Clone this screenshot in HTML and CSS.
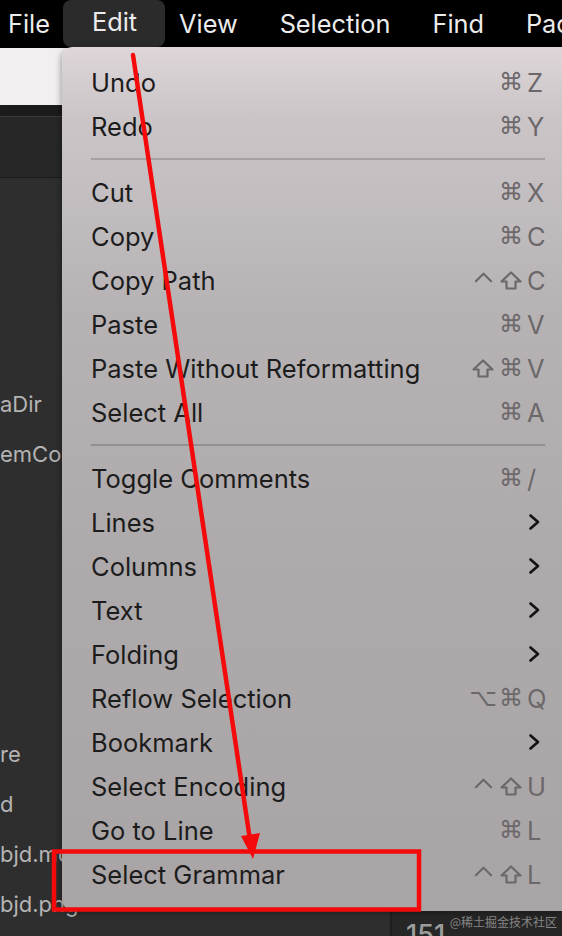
FILE: index.html
```html
<!DOCTYPE html>
<html>
<head>
<meta charset="utf-8">
<link rel="stylesheet" href="styles.css">
</head>
<body>
<div class="screen">
  <header class="menubar">
    <span class="mb-item">File</span>
    <span class="mb-item active">Edit</span>
    <span class="mb-item">View</span>
    <span class="mb-item">Selection</span>
    <span class="mb-item">Find</span>
    <span class="mb-item">Packages</span>
  </header>

  <div class="window">
    <div class="toolbar"></div>
    <div class="titlestrip"></div>
    <div class="tabbar"></div>
    <div class="main">
      <div class="tree">
        <div class="row">aDir</div>
        <div class="row">emCor</div>
        <div class="row"></div>
        <div class="row"></div>
        <div class="row"></div>
        <div class="row"></div>
        <div class="row"></div>
        <div class="row">re</div>
        <div class="row">d</div>
        <div class="row">bjd.md</div>
        <div class="row">bjd.png</div>
      </div>
      <div class="editor">
        <span class="ln">151</span>
      </div>
    </div>
  </div>

  <div class="menu">
    <div class="item"><span class="label">Undo</span><span class="sc"><span class="mod">⌘</span><span class="key">Z</span></span></div>
    <div class="item"><span class="label">Redo</span><span class="sc"><span class="mod">⌘</span><span class="key">Y</span></span></div>
    <div class="sep"></div>
    <div class="item"><span class="label">Cut</span><span class="sc"><span class="mod">⌘</span><span class="key">X</span></span></div>
    <div class="item"><span class="label">Copy</span><span class="sc"><span class="mod">⌘</span><span class="key">C</span></span></div>
    <div class="item"><span class="label">Copy Path</span><span class="sc"><span class="mod"><svg class="ico ctrl" viewBox="0 0 20 12"><path d="M2 10.5 L10 2.5 L18 10.5"/></svg></span><span class="mod"><svg class="ico shift" viewBox="0 0 22 19"><path d="M11 1.5 L20.5 10.5 L15.5 10.5 L15.5 17.5 L6.5 17.5 L6.5 10.5 L1.5 10.5 Z"/></svg></span><span class="key">C</span></span></div>
    <div class="item"><span class="label">Paste</span><span class="sc"><span class="mod">⌘</span><span class="key">V</span></span></div>
    <div class="item"><span class="label">Paste Without Reformatting</span><span class="sc"><span class="mod"><svg class="ico shift" viewBox="0 0 22 19"><path d="M11 1.5 L20.5 10.5 L15.5 10.5 L15.5 17.5 L6.5 17.5 L6.5 10.5 L1.5 10.5 Z"/></svg></span><span class="mod">⌘</span><span class="key">V</span></span></div>
    <div class="item"><span class="label">Select All</span><span class="sc"><span class="mod">⌘</span><span class="key">A</span></span></div>
    <div class="sep"></div>
    <div class="item"><span class="label">Toggle Comments</span><span class="sc"><span class="mod">⌘</span><span class="key">/</span></span></div>
    <div class="item"><span class="label">Lines</span><span class="sc"><span class="key"><svg class="chev" viewBox="0 0 11 16"><path d="M1.5 1.5 L9 8 L1.5 14.5"/></svg></span></span></div>
    <div class="item"><span class="label">Columns</span><span class="sc"><span class="key"><svg class="chev" viewBox="0 0 11 16"><path d="M1.5 1.5 L9 8 L1.5 14.5"/></svg></span></span></div>
    <div class="item"><span class="label">Text</span><span class="sc"><span class="key"><svg class="chev" viewBox="0 0 11 16"><path d="M1.5 1.5 L9 8 L1.5 14.5"/></svg></span></span></div>
    <div class="item"><span class="label">Folding</span><span class="sc"><span class="key"><svg class="chev" viewBox="0 0 11 16"><path d="M1.5 1.5 L9 8 L1.5 14.5"/></svg></span></span></div>
    <div class="item"><span class="label">Reflow Selection</span><span class="sc"><span class="mod">⌥</span><span class="mod">⌘</span><span class="key">Q</span></span></div>
    <div class="item"><span class="label">Bookmark</span><span class="sc"><span class="key"><svg class="chev" viewBox="0 0 11 16"><path d="M1.5 1.5 L9 8 L1.5 14.5"/></svg></span></span></div>
    <div class="item"><span class="label">Select Encoding</span><span class="sc"><span class="mod"><svg class="ico ctrl" viewBox="0 0 20 12"><path d="M2 10.5 L10 2.5 L18 10.5"/></svg></span><span class="mod"><svg class="ico shift" viewBox="0 0 22 19"><path d="M11 1.5 L20.5 10.5 L15.5 10.5 L15.5 17.5 L6.5 17.5 L6.5 10.5 L1.5 10.5 Z"/></svg></span><span class="key">U</span></span></div>
    <div class="item"><span class="label">Go to Line</span><span class="sc"><span class="mod">⌘</span><span class="key">L</span></span></div>
    <div class="item"><span class="label">Select Grammar</span><span class="sc"><span class="mod"><svg class="ico ctrl" viewBox="0 0 20 12"><path d="M2 10.5 L10 2.5 L18 10.5"/></svg></span><span class="mod"><svg class="ico shift" viewBox="0 0 22 19"><path d="M11 1.5 L20.5 10.5 L15.5 10.5 L15.5 17.5 L6.5 17.5 L6.5 10.5 L1.5 10.5 Z"/></svg></span><span class="key">L</span></span></div>
  </div>

  <div class="watermark">@稀土掘金技术社区</div>

  <svg class="annot" viewBox="0 0 562 936">
    <line x1="133" y1="55" x2="250" y2="840" stroke="#f40a0a" stroke-width="4.5" stroke-linecap="round"/>
    <polygon points="253,859 241,836 260,833" fill="#f40a0a"/>
    <rect x="54" y="851.5" width="365" height="58" fill="none" stroke="#f40a0a" stroke-width="4.5"/>
  </svg>
</div>
</body>
</html>
```

FILE: styles.css
```css
html, body {
  margin: 0;
  padding: 0;
  background: #2d2d2d;
}

.screen {
  position: relative;
  width: 562px;
  height: 936px;
  overflow: hidden;
  background: #2d2d2d;
  font-family: Inter, "Noto Sans", sans-serif;
}

/* top menu bar */
.menubar {
  height: 48px;
  background: #000;
  display: flex;
  align-items: center;
  gap: 42px;
  padding-left: 8px;
  color: #ececec;
  font-size: 25.3px;
  white-space: nowrap;
}

.mb-item {
  line-height: 44px;
}

.mb-item.active {
  align-self: flex-start;
  height: 47px;
  line-height: 44px;
  padding: 0 28px 0 29px;
  margin: 0 -28px 0 -29px;
  background: #2b2b2b;
  border-radius: 8px;
}

/* underlying window */
.toolbar {
  height: 57px;
  background: linear-gradient(90deg, #f3f0f2, #e8e1e4);
}

.titlestrip {
  height: 11px;
  background: #1b1b1b;
  border-bottom: 1px solid #3b3b3b;
}

.tabbar {
  height: 60px;
  background: #272727;
  border-bottom: 1px solid #1a1a1a;
}

.main {
  display: flex;
  height: 758px;
}

.tree {
  width: 390px;
  background: #2e2e2e;
  padding-top: 201px;
  border-right: 2px solid #1f1f1f;
  overflow: hidden;
}

.row {
  height: 50px;
  line-height: 50px;
  font-size: 22px;
  color: #b4b4b4;
  white-space: nowrap;
}

.editor {
  flex: 1;
  background: #262626;
  display: flex;
  flex-direction: column;
  justify-content: flex-end;
}

.ln {
  font-size: 27px;
  line-height: 30px;
  color: #9c9c9c;
  padding-left: 14px;
  margin-bottom: -14px;
  font-weight: 500;
}

/* dropdown menu */
.menu {
  position: absolute;
  left: 62px;
  top: 47px;
  right: 0;
  padding: 13px 0 15px;
  background: linear-gradient(180deg, #ded6d9 0px, #cbc5c8 70px, #b7b3b5 260px, #aeaaac 520px, #a9a5a7 100%);
  border-radius: 10px 0 0 12px;
  box-shadow: -1px 2px 6px rgba(0, 0, 0, 0.35);
}

.item {
  display: flex;
  align-items: center;
  height: 44px;
  padding: 0 17px 0 29px;
  font-size: 25.5px;
  color: #1c1c1c;
  white-space: nowrap;
}

.label {
  flex: 1;
}

.sc {
  display: flex;
  align-items: center;
  color: #6c686a;
}

.mod {
  width: 22px;
  height: 30px;
  margin-left: 6px;
  display: flex;
  align-items: center;
  justify-content: center;
  font-family: "DejaVu Sans", sans-serif;
  font-size: 24px;
}

.ico {
  fill: none;
  stroke: #6c686a;
  stroke-width: 2.2;
  stroke-linejoin: round;
  stroke-linecap: round;
}

.ico.ctrl {
  width: 19px;
  height: 12px;
  margin-top: -7px;
}

.ico.shift {
  width: 22px;
  height: 19px;
}

.key {
  width: 18px;
  margin-left: 5px;
  display: flex;
  align-items: center;
}

.chev {
  width: 11px;
  height: 16px;
  margin-left: 2px;
  fill: none;
  stroke: #111;
  stroke-width: 2.6;
  stroke-linecap: round;
  stroke-linejoin: round;
}

.sep {
  height: 2px;
  margin: 10px 17px 10px 29px;
  background: rgba(0, 0, 0, 0.17);
}

/* overlays */
.watermark {
  position: absolute;
  right: 5px;
  bottom: 6px;
  font-family: "Noto Sans CJK SC", sans-serif;
  font-size: 12px;
  color: rgba(190, 190, 190, 0.65);
}

.annot {
  position: absolute;
  left: 0;
  top: 0;
  width: 562px;
  height: 936px;
  pointer-events: none;
}
```
